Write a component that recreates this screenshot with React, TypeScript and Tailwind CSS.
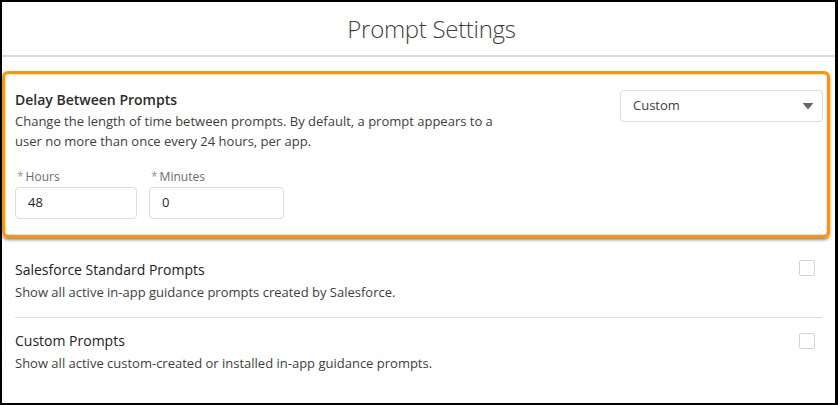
import React from "react";

function Checkbox() {
  return <div className="w-4 h-4 border border-[#d4d4d4] rounded-[2px] bg-white shrink-0" />;
}

export default function App() {
  return (
    <div className="w-[838px] h-[405px] bg-black pt-[2px] pl-[2px] pr-[3px] pb-[2px]" style={{ fontFamily: '"Open Sans", sans-serif' }}>
      <div className="w-full h-full bg-white flex flex-col">
        <div className="h-[55px] flex items-center justify-center pl-[26px] border-b-2 border-[#dadada]">
          <span className="text-[24px] font-light text-[#3e3e3c] tracking-[-0.3px]">Prompt Settings</span>
        </div>
        <div className="mt-[14px] w-[828px] h-[167px] border-[3px] border-[#ff9400] rounded-[6px] shadow-[0_2px_3px_rgba(0,0,0,0.45),inset_0_0_2px_rgba(0,0,0,0.35)] pl-[10px] pr-[4px] pt-[16px]">
          <div className="flex justify-between">
            <div className="flex flex-col">
              <div className="text-[14px] leading-[20px] font-semibold text-[#2b2b2b]">Delay Between Prompts</div>
              <div className="mt-[1px] text-[13px] leading-[20px] text-[#3e3e3c] w-[490px]">
                Change the length of time between prompts. By default, a prompt appears to a user no more than once every 24 hours, per app.
              </div>
            </div>
            <div className="w-[203px] h-[32px] border border-[#d8dde6] rounded-[4px] flex items-center justify-between pl-[12px] pr-[8px]">
              <span className="text-[13px] text-[#3e3e3c]">Custom</span>
              <svg width="12" height="8" viewBox="0 0 12 8"><path d="M0.5 1 L11.5 1 L6 7.5 Z" fill="#666" /></svg>
            </div>
          </div>
          <div className="flex gap-[12px] mt-[18px]">
            <div className="flex flex-col">
              <div className="text-[12px] leading-[16px] text-[#6b6b6b] pl-[2px]"><span className="text-[#999] mr-[2px]">*</span>Hours</div>
              <div className="mt-[2px] w-[122px] h-[32px] border border-[#d8dde6] rounded-[4px] flex items-center px-[12px] text-[13px] text-[#222]">48</div>
            </div>
            <div className="flex flex-col">
              <div className="text-[12px] leading-[16px] text-[#6b6b6b] pl-[2px]"><span className="text-[#999] mr-[2px]">*</span>Minutes</div>
              <div className="mt-[2px] w-[135px] h-[32px] border border-[#d8dde6] rounded-[4px] flex items-center px-[12px] text-[13px] text-[#222]">0</div>
            </div>
          </div>
        </div>
        <div className="pl-[13px] pr-[20px] mt-[22px]">
          <div className="flex justify-between">
            <div className="flex flex-col">
              <div className="text-[14px] leading-[20px] font-medium text-[#222]">Salesforce Standard Prompts</div>
              <div className="mt-[1px] text-[13px] leading-[22px] text-[#3e3e3c]">Show all active in-app guidance prompts created by Salesforce.</div>
            </div>
            <div><Checkbox /></div>
          </div>
          <div className="border-t border-[#dddddd] mt-[14px] mr-[-7px]" />
          <div className="flex justify-between mt-[13px]">
            <div className="flex flex-col">
              <div className="text-[14px] leading-[20px] font-medium text-[#222]">Custom Prompts</div>
              <div className="mt-[1px] text-[13px] leading-[22px] text-[#3e3e3c]">Show all active custom-created or installed in-app guidance prompts.</div>
            </div>
            <div className="pt-[2px]"><Checkbox /></div>
          </div>
        </div>
      </div>
    </div>
  );
}
